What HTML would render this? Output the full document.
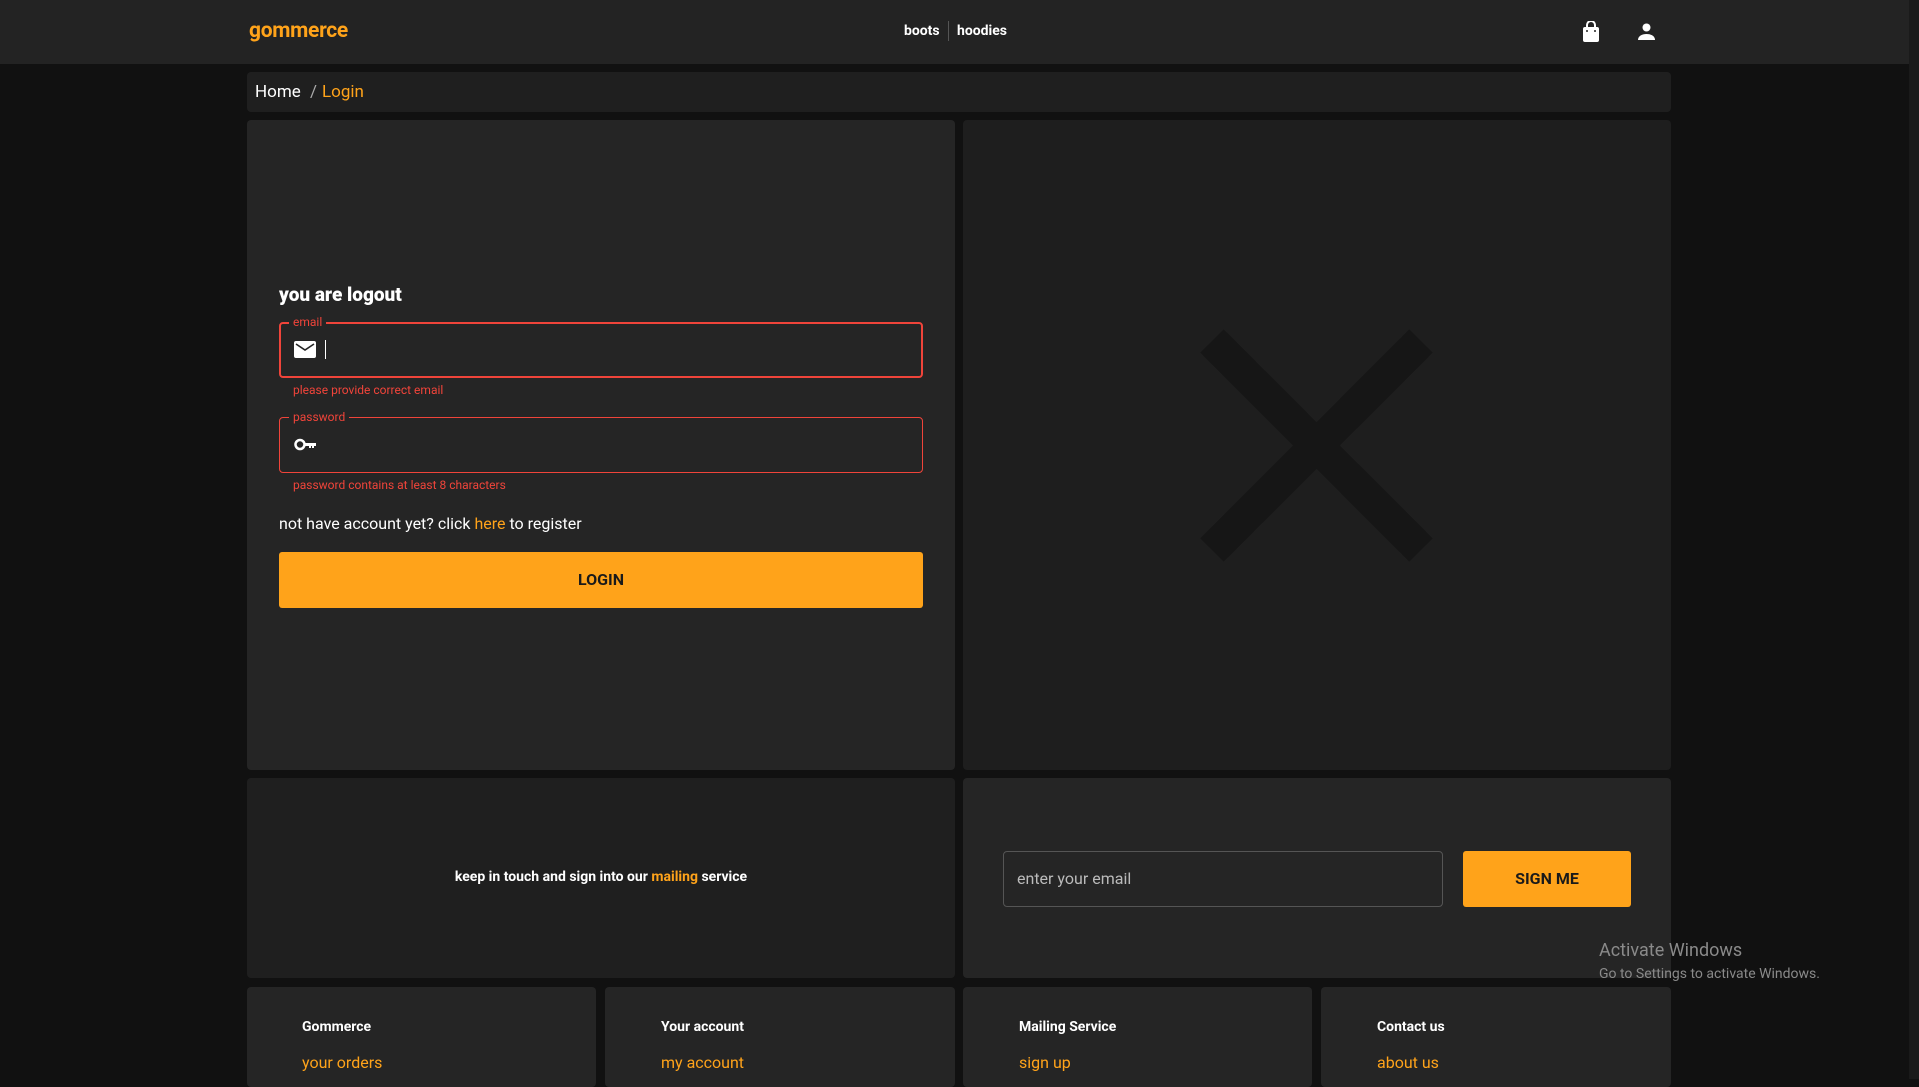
<!DOCTYPE html>
<html><head><meta charset="utf-8"><style>
*{box-sizing:border-box;margin:0;padding:0}
body{width:1919px;height:1079px;overflow:hidden;background:#111;font-family:Roboto,"Liberation Sans",sans-serif;position:relative;color:#fff}
.abs{position:absolute}
.hdr{left:0;top:0;width:1909px;height:64px;background:#232323}
.sb{left:1909px;top:0;width:10px;height:1079px;background:#1a1a1a}
.card{position:absolute;border-radius:4px}
.o{color:#ffa31a}
.red{color:#f0443a}
</style></head><body>
<div class="abs hdr"></div>
<div class="abs sb"></div>
<div class="abs o" style="left:249px;top:19px;font-size:21px;font-weight:bold;letter-spacing:-0.3px">gommerce</div>
<div class="abs" style="left:904px;top:23px;font-size:14px;font-weight:bold">boots</div>
<div class="abs" style="left:948px;top:21px;width:1px;height:20px;background:#555"></div>
<div class="abs" style="left:957px;top:23px;font-size:14px;font-weight:bold">hoodies</div>
<svg class="abs" style="left:1582px;top:21px" width="18" height="21" viewBox="0 0 18 21"><path d="M5 7V4a4 4 0 0 1 8 0v3" fill="none" stroke="#fff" stroke-width="2"/><rect x="1" y="6" width="16" height="15" rx="2" fill="#fff"/><circle cx="5" cy="10" r="1" fill="#232323"/><circle cx="13" cy="10" r="1" fill="#232323"/></svg>
<svg class="abs" style="left:1638px;top:23px" width="17" height="17" viewBox="0 0 17 17"><circle cx="8.5" cy="4.5" r="4" fill="#fff"/><path d="M0 17c0-4 4-6 8.5-6S17 13 17 17z" fill="#fff"/></svg>

<div class="card" style="left:247px;top:72px;width:1424px;height:40px;background:#1f1f1f"></div>
<div class="abs" style="left:255px;top:82px;font-size:17px">Home <span style="color:#aaa;margin:0 5px">/</span><span class="o">Login</span></div>

<div class="card" style="left:247px;top:120px;width:708px;height:650px;background:#252525"></div>
<div class="card" style="left:963px;top:120px;width:708px;height:650px;background:#1e1e1e"></div>
<svg class="abs" style="left:1200px;top:329px" width="233" height="233" viewBox="0 0 233 233"><path d="M12 12L221 221M221 12L12 221" stroke="#161616" stroke-width="33"/></svg>

<div class="abs" style="left:279px;top:283px;font-size:19px;font-weight:900">you are logout</div>
<div class="abs" style="left:279px;top:322px;width:644px;height:56px;border:2px solid #f0443a;border-radius:4px"></div>
<div class="abs red" style="left:289px;top:315px;font-size:12px;background:#252525;padding:0 4px">email</div>
<svg class="abs" style="left:294px;top:341px" width="22" height="17" viewBox="0 0 22 17"><rect width="22" height="17" rx="2" fill="#fff"/><path d="M2 3l9 6 9-6" fill="none" stroke="#252525" stroke-width="1.6"/></svg>
<div class="abs" style="left:325px;top:340px;width:1px;height:19px;background:#fff"></div>
<div class="abs red" style="left:293px;top:383px;font-size:12px">please provide correct email</div>
<div class="abs" style="left:279px;top:417px;width:644px;height:56px;border:1px solid #f0443a;border-radius:4px"></div>
<div class="abs red" style="left:289px;top:410px;font-size:12px;background:#252525;padding:0 4px">password</div>
<svg class="abs" style="left:294px;top:438px" width="22" height="13" viewBox="0 0 22 13"><circle cx="6" cy="6.5" r="4.5" fill="none" stroke="#fff" stroke-width="2.5"/><path d="M10 5h12v3h-2v2h-2V8h-1v2h-2V8h-5z" fill="#fff"/></svg>
<div class="abs red" style="left:293px;top:478px;font-size:12px">password contains at least 8 characters</div>
<div class="abs" style="left:279px;top:514px;font-size:16px">not have account yet? click <span class="o">here</span> to register</div>
<div class="abs" style="left:279px;top:552px;width:644px;height:56px;background:#ffa31a;border-radius:3px;color:#1a1a1a;font-weight:bold;font-size:16px;text-align:center;line-height:56px">LOGIN</div>

<div class="card" style="left:247px;top:778px;width:708px;height:200px;background:#1f1f1f"></div>
<div class="card" style="left:963px;top:778px;width:708px;height:200px;background:#252525"></div>
<div class="abs" style="left:247px;top:869px;width:708px;text-align:center;font-size:14px;font-weight:bold">keep in touch and sign into our <span class="o">mailing</span> service</div>
<div class="abs" style="left:1003px;top:851px;width:440px;height:56px;border:1px solid #555;border-radius:4px;color:#bbb;font-size:16px;line-height:54px;padding-left:13px">enter your email</div>
<div class="abs" style="left:1463px;top:851px;width:168px;height:56px;background:#ffa31a;border-radius:3px;color:#1a1a1a;font-weight:bold;font-size:16px;text-align:center;line-height:56px">SIGN ME</div>

<div class="card" style="left:247px;top:987px;width:349px;height:100px;background:#252525"></div>
<div class="card" style="left:605px;top:987px;width:350px;height:100px;background:#252525"></div>
<div class="card" style="left:963px;top:987px;width:349px;height:100px;background:#252525"></div>
<div class="card" style="left:1321px;top:987px;width:350px;height:100px;background:#252525"></div>
<div class="abs" style="left:302px;top:1019px;font-size:14px;font-weight:bold">Gommerce</div>
<div class="abs" style="left:661px;top:1019px;font-size:14px;font-weight:bold">Your account</div>
<div class="abs" style="left:1019px;top:1019px;font-size:14px;font-weight:bold">Mailing Service</div>
<div class="abs" style="left:1377px;top:1019px;font-size:14px;font-weight:bold">Contact us</div>
<div class="abs o" style="left:302px;top:1053px;font-size:16px">your orders</div>
<div class="abs o" style="left:661px;top:1053px;font-size:16px">my account</div>
<div class="abs o" style="left:1019px;top:1053px;font-size:16px">sign up</div>
<div class="abs o" style="left:1377px;top:1053px;font-size:16px">about us</div>

<div class="abs" style="left:1599px;top:940px;font-size:18px;color:#8a8a8a">Activate Windows</div>
<div class="abs" style="left:1599px;top:966px;font-size:14px;color:#8a8a8a">Go to Settings to activate Windows.</div>
</body></html>
